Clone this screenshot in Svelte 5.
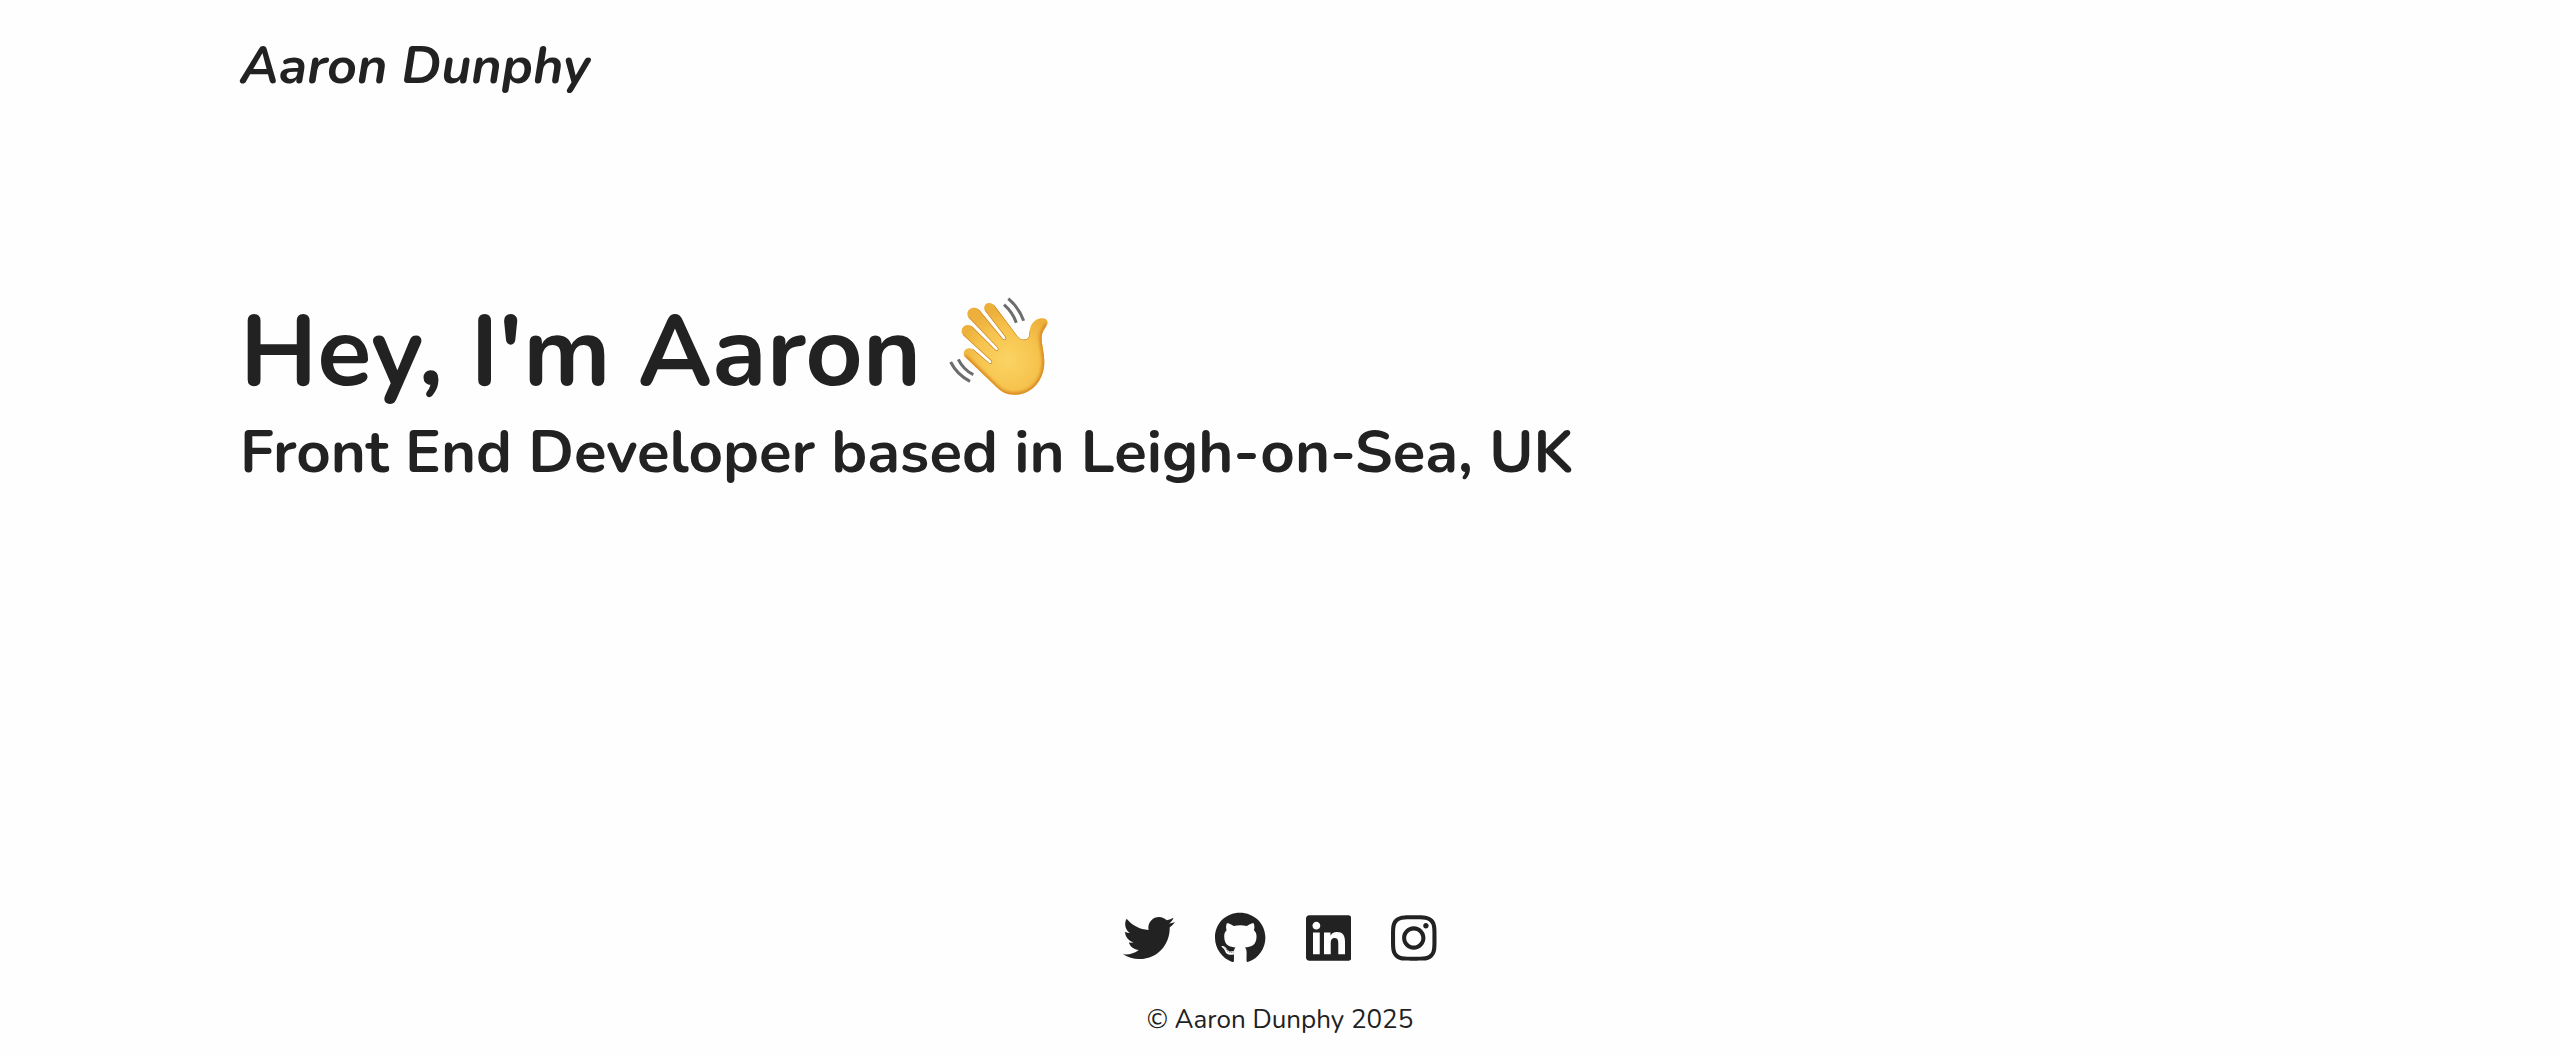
<script>
  const links = [
    {
      name: 'Twitter',
      href: '#twitter',
      width: 512,
      path: 'M459.37 151.716c.325 4.548.325 9.097.325 13.645 0 138.72-105.583 298.558-298.558 298.558-59.452 0-114.68-17.219-161.137-47.106 8.447.974 16.568 1.299 25.34 1.299 49.055 0 94.213-16.568 130.274-44.832-46.132-.975-84.792-31.188-98.112-72.772 6.498.974 12.995 1.624 19.818 1.624 9.421 0 18.843-1.3 27.614-3.573-48.081-9.747-84.143-51.98-84.143-102.985v-1.299c13.969 7.797 30.214 12.67 47.431 13.319-28.264-18.843-46.781-51.005-46.781-87.391 0-19.492 5.197-37.36 14.294-52.954 51.655 63.675 129.3 105.258 216.365 109.807-1.624-7.797-2.599-15.918-2.599-24.04 0-57.828 46.782-104.934 104.934-104.934 30.213 0 57.502 12.67 76.67 33.137 23.715-4.548 46.456-13.32 66.599-25.34-7.798 24.366-24.366 44.833-46.132 57.827 21.117-2.273 41.584-8.122 60.426-16.243-14.292 20.791-32.161 39.308-52.628 54.253z'
    },
    {
      name: 'GitHub',
      href: '#github',
      width: 496,
      path: 'M165.9 397.4c0 2-2.3 3.6-5.2 3.6-3.3.3-5.6-1.3-5.6-3.6 0-2 2.3-3.6 5.2-3.6 3-.3 5.6 1.3 5.6 3.6zm-31.1-4.5c-.7 2 1.3 4.3 4.3 4.9 2.6 1 5.6 0 6.2-2s-1.3-4.3-4.3-5.2c-2.6-.7-5.5.3-6.2 2.3zm44.2-1.7c-2.9.7-4.9 2.6-4.6 4.9.3 2 2.9 3.3 5.9 2.6 2.9-.7 4.9-2.6 4.6-4.6-.3-1.9-3-3.2-5.9-2.9zM244.8 8C106.1 8 0 113.3 0 252c0 110.9 69.8 205.8 169.5 239.2 12.8 2.3 17.3-5.6 17.3-12.1 0-6.2-.3-40.4-.3-61.4 0 0-70 15-84.7-29.8 0 0-11.4-29.1-27.8-36.6 0 0-22.9-15.7 1.6-15.4 0 0 24.9 2 38.6 25.8 21.9 38.6 58.6 27.5 72.9 20.9 2.3-16 8.8-27.1 16-33.7-55.9-6.2-112.3-14.3-112.3-110.5 0-27.5 7.6-41.3 23.6-58.9-2.6-6.5-11.1-33.3 2.6-67.9 20.9-6.5 69 27 69 27 20-5.6 41.5-8.5 62.8-8.5s42.8 2.9 62.8 8.5c0 0 48.1-33.6 69-27 13.7 34.7 5.2 61.4 2.6 67.9 16 17.7 25.8 31.5 25.8 58.9 0 96.5-58.9 104.2-114.8 110.5 9.2 7.9 17 22.9 17 46.4 0 33.7-.3 75.4-.3 83.6 0 6.5 4.6 14.4 17.3 12.1C428.2 457.8 496 362.9 496 252 496 113.3 383.5 8 244.8 8zM97.2 352.9c-1.3 1-1 3.3.7 5.2 1.6 1.6 3.9 2.3 5.2 1 1.3-1 1-3.3-.7-5.2-1.6-1.6-3.9-2.3-5.2-1zm-10.8-8.1c-.7 1.3.3 2.9 2.3 3.9 1.6 1 3.6.7 4.3-.7.7-1.3-.3-2.9-2.3-3.9-2-.6-3.6-.3-4.3.7zm32.4 35.6c-1.6 1.3-1 4.3 1.3 6.2 2.3 2.3 5.2 2.6 6.5 1 1.3-1.3.7-4.3-1.3-6.2-2.2-2.3-5.2-2.6-6.5-1zm-11.4-14.7c-1.6 1-1.6 3.6 0 5.9 1.6 2.3 4.3 3.3 5.6 2.3 1.6-1.3 1.6-3.9 0-6.2-1.4-2.3-4-3.3-5.6-2z'
    },
    {
      name: 'LinkedIn',
      href: '#linkedin',
      width: 448,
      path: 'M416 32H31.9C14.3 32 0 46.5 0 64.3v383.4C0 465.5 14.3 480 31.9 480H416c17.6 0 32-14.5 32-32.3V64.3c0-17.8-14.4-32.3-32-32.3zM135.4 416H69V202.2h66.5V416zm-33.2-243c-21.3 0-38.5-17.3-38.5-38.5S80.9 96 102.2 96c21.2 0 38.5 17.3 38.5 38.5 0 21.3-17.2 38.5-38.5 38.5zm282.1 243h-66.4V312c0-24.8-.5-56.7-34.5-56.7-34.6 0-39.9 27-39.9 54.9V416h-66.4V202.2h63.7v29.2h.9c8.9-16.8 30.6-34.5 62.9-34.5 67.2 0 79.7 44.3 79.7 101.9V416z'
    },
    {
      name: 'Instagram',
      href: '#instagram',
      width: 448,
      path: 'M224.1 141c-63.6 0-114.9 51.3-114.9 114.9s51.3 114.9 114.9 114.9S339 319.5 339 255.9 287.7 141 224.1 141zm0 189.6c-41.1 0-74.7-33.5-74.7-74.7s33.5-74.7 74.7-74.7 74.7 33.5 74.7 74.7-33.6 74.7-74.7 74.7zm146.4-194.3c0 14.9-12 26.8-26.8 26.8-14.9 0-26.8-12-26.8-26.8s12-26.8 26.8-26.8 26.8 12 26.8 26.8zm76.1 27.2c-1.7-35.9-9.9-67.7-36.2-93.9-26.2-26.2-58-34.4-93.9-36.2-37-2.1-147.9-2.1-184.9 0-35.8 1.7-67.6 9.9-93.9 36.1s-34.4 58-36.2 93.9c-2.1 37-2.1 147.9 0 184.9 1.7 35.9 9.9 67.7 36.2 93.9s58 34.4 93.9 36.2c37 2.1 147.9 2.1 184.9 0 35.9-1.7 67.7-9.9 93.9-36.2 26.2-26.2 34.4-58 36.2-93.9 2.1-37 2.1-147.8 0-184.8zM398.8 388c-7.8 19.6-22.9 34.7-42.6 42.6-29.5 11.7-99.5 9-132.1 9s-102.7 2.6-132.1-9c-19.6-7.8-34.7-22.9-42.6-42.6-11.7-29.5-9-99.5-9-132.1s-2.6-102.7 9-132.1c7.8-19.6 22.9-34.7 42.6-42.6 29.5-11.7 99.5-9 132.1-9s102.7-2.6 132.1 9c19.6 7.8 34.7 22.9 42.6 42.6 11.7 29.5 9 99.5 9 132.1s2.7 102.7-9 132.1z'
    }
  ];
</script>

<div class="page">
  <header class="container">
    <a class="logo" href="#home">Aaron Dunphy</a>
  </header>

  <main class="container">
    <h1>
      Hey, I'm Aaron
      <svg class="wave" viewBox="84 48 306 306" role="img" aria-label="Waving hand">
        <defs>
          <radialGradient id="skin" gradientUnits="userSpaceOnUse" cx="262" cy="240" r="150">
            <stop offset="0" stop-color="#fbd363" />
            <stop offset="0.6" stop-color="#f6c44e" />
            <stop offset="1" stop-color="#edb03c" />
          </radialGradient>
          <clipPath id="hand-clip"><use href="#hand" /></clipPath>
          <filter id="soft" x="-10%" y="-10%" width="120%" height="120%">
            <feGaussianBlur stdDeviation="5" />
          </filter>
        </defs>
        <path
          id="hand"
          fill="url(#skin)"
          d="M133 229C125 211 144 198 160 208L207 248C212 252 217 248 213 242L129 165C116 147 136 127 155 138L225 208C231 214 237 210 231 202L145 112C134 92 157 75 176 88L247 174C253 182 260 178 255 170L194 91C187 71 209 61 223 76L289 164C298 176 307 181 317 178C328 175 328 166 329 152C331 132 345 117 363 115C377 112 386 121 382 132C376 144 366 154 365 171C364 193 373 217 373 245C373 300 337 341 289 344C263 346 245 337 230 322Z"
        />
        <g clip-path="url(#hand-clip)" fill="none">
          <path class="shade" filter="url(#soft)" d="M133 229L230 322C245 337 263 346 289 344C337 341 373 300 373 245C373 217 364 193 365 171C366 154 376 144 382 132" />
          <path class="crease" d="M160 208L207 248C212 252 217 248 213 242L129 165M155 138L225 208C231 214 237 210 231 202L145 112M176 88L247 174C253 182 260 178 255 170L194 91M223 76L289 164C298 176 307 181 317 178C328 175 328 166 329 152" />
        </g>
        <g class="motion">
          <path d="M252 74Q278 97 289 128" />
          <path d="M265 56Q296 82 311 122" />
          <path d="M115 238Q130 269 160 284" />
          <path d="M92 246Q111 284 150 304" />
        </g>
      </svg>
    </h1>
    <h2>Front End Developer based in Leigh-on-Sea, UK</h2>
  </main>

  <footer>
    <nav aria-label="Social links">
      {#each links as link}
        <a href={link.href} aria-label={link.name}>
          <svg class="icon" viewBox="0 0 {link.width} 512" aria-hidden="true">
            <path d={link.path} />
          </svg>
        </a>
      {/each}
    </nav>
    <p>© Aaron Dunphy 2025</p>
  </footer>
</div>

<style>
  :global(body) {
    background: #fefefe;
  }

  .page {
    box-sizing: border-box;
    min-height: 100vh;
    display: flex;
    flex-direction: column;
    color: #222;
    font-family: Nunito, Lato, sans-serif;
  }

  .container {
    box-sizing: border-box;
    width: 100%;
    max-width: 2160px;
    margin: 0 auto;
    padding-left: 40px;
    padding-right: 40px;
  }

  header {
    padding-top: 32px;
  }

  .logo {
    display: inline-block;
    color: inherit;
    font-size: 52px;
    font-style: italic;
    font-weight: 700;
    line-height: 68px;
    text-decoration: none;
  }

  main {
    flex: 1;
    padding-top: 196px;
  }

  h1,
  h2,
  p {
    margin: 0;
  }

  h1 {
    display: flex;
    flex-wrap: wrap;
    align-items: flex-start;
    gap: 27px;
    font-size: 100px;
    line-height: 112px;
  }

  h2 {
    font-size: 60px;
    line-height: 88px;
  }

  .wave {
    width: 102px;
    height: 102px;
  }

  .shade {
    stroke: #d98a20;
    stroke-width: 14px;
  }

  .crease {
    stroke: #d08a2c;
    stroke-width: 4px;
  }

  .motion {
    fill: none;
    stroke: #6b6d6e;
    stroke-width: 9px;
  }

  footer {
    padding-bottom: 18px;
    text-align: center;
  }

  nav {
    display: flex;
    justify-content: center;
    gap: 40px;
  }

  nav a {
    color: inherit;
  }

  .icon {
    display: block;
    height: 52px;
    fill: currentColor;
  }

  p {
    margin-top: 38px;
    font-size: 26px;
    line-height: 36px;
  }
</style>
